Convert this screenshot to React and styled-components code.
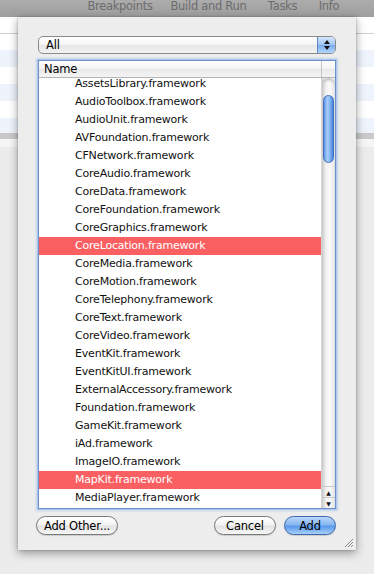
import React from 'react';
import styled, { createGlobalStyle } from 'styled-components';

const GlobalStyle = createGlobalStyle`
  html, body {
    margin: 0;
    padding: 0;
    background: #ebebeb;
  }
  body {
    font-family: "DejaVu Sans", "Liberation Sans", sans-serif;
    letter-spacing: -0.2px;
  }
`;

const FRAMEWORKS = [
  'AssetsLibrary.framework',
  'AudioToolbox.framework',
  'AudioUnit.framework',
  'AVFoundation.framework',
  'CFNetwork.framework',
  'CoreAudio.framework',
  'CoreData.framework',
  'CoreFoundation.framework',
  'CoreGraphics.framework',
  'CoreLocation.framework',
  'CoreMedia.framework',
  'CoreMotion.framework',
  'CoreTelephony.framework',
  'CoreText.framework',
  'CoreVideo.framework',
  'EventKit.framework',
  'EventKitUI.framework',
  'ExternalAccessory.framework',
  'Foundation.framework',
  'GameKit.framework',
  'iAd.framework',
  'ImageIO.framework',
  'MapKit.framework',
  'MediaPlayer.framework'
];

const SELECTED = ['CoreLocation.framework', 'MapKit.framework'];

const TOOLBAR = [
  { label: 'Breakpoints', width: 80 },
  { label: 'Build and Run', width: 97 },
  { label: 'Tasks', width: 51 },
  { label: 'Info', width: 42 }
];

const Window = styled.div`
  width: 374px;
  height: 574px;
  display: flex;
  flex-direction: column;
  overflow: hidden;
`;

const Toolbar = styled.div`
  height: 17px;
  flex: none;
  display: flex;
  align-items: flex-start;
  padding-left: 80px;
  background: linear-gradient(#acacac, #9e9e9e);
  box-sizing: border-box;
`;

const ToolLabel = styled.span`
  width: ${({ $w }) => $w}px;
  text-align: center;
  font-size: 11.5px;
  line-height: 13px;
  letter-spacing: -0.3px;
  color: #6c6c6c;
  white-space: nowrap;
`;

const Backdrop = styled.div`
  flex: 1;
  display: flex;
  align-items: flex-start;
  background: linear-gradient(
    #ffffff 0px, #ffffff 16px,
    #cfcfcf 16px, #cfcfcf 17px,
    #ffffff 17px, #ffffff 33px,
    #eef3fc 33px, #eef3fc 50px,
    #ffffff 50px, #ffffff 67px,
    #eef3fc 67px, #eef3fc 84px,
    #ffffff 84px, #ffffff 101px,
    #eef3fc 101px, #eef3fc 116px,
    #c9c9c9 116px, #c9c9c9 122px,
    #f6f6f6 122px, #f6f6f6 130px,
    #ececec 130px
  );
`;

const Sheet = styled.div`
  position: relative;
  width: 338px;
  height: 533px;
  margin-left: 18px;
  box-sizing: border-box;
  padding: 19px 20px 0 20px;
  display: flex;
  flex-direction: column;
  background: #ededed;
  box-shadow: 0 3px 9px rgba(0, 0, 0, 0.38), 0 0 2px rgba(0, 0, 0, 0.25);
`;

const Popup = styled.div`
  height: 18px;
  display: flex;
  align-items: stretch;
  border: 1px solid #8b8b8b;
  border-radius: 5px;
  overflow: hidden;
  background: linear-gradient(#ffffff, #f4f4f4 50%, #e6e6e6 51%, #f2f2f2);
  box-sizing: border-box;
`;

const PopupText = styled.span`
  flex: 1;
  padding-left: 7px;
  font-size: 11.5px;
  line-height: 16px;
  color: #000;
`;

const PopupArrows = styled.span`
  width: 17px;
  display: flex;
  flex-direction: column;
  align-items: center;
  justify-content: center;
  gap: 2px;
  border-left: 1px solid #5f86c4;
  background: linear-gradient(#d5e6fb, #9fc4f3 50%, #79abee 51%, #b4d6fb);
`;

const Table = styled.div`
  margin-top: 6px;
  height: 449px;
  display: flex;
  flex-direction: column;
  border: 1px solid #6d90c9;
  box-shadow: 0 0 0 1px #a9c6ee, 0 0 2px 2px rgba(120, 160, 225, 0.35);
  background: #fff;
  box-sizing: border-box;
`;

const Header = styled.div`
  height: 17px;
  flex: none;
  display: flex;
  background: linear-gradient(#ffffff, #f3f3f3 50%, #e9e9e9 51%, #f4f4f4);
  border-bottom: 1px solid #b4b4b4;
  box-sizing: border-box;
`;

const HeaderCell = styled.div`
  flex: 1;
  padding-left: 5px;
  font-size: 11.5px;
  line-height: 16px;
  color: #000;
  border-right: 1px solid #c4c4c4;
`;

const HeaderCorner = styled.div`
  width: 13px;
`;

const ListArea = styled.div`
  flex: 1;
  display: flex;
  min-height: 0;
`;

const List = styled.div`
  flex: 1;
  overflow: hidden;
`;

const Rows = styled.div`
  margin-top: -3px;
`;

const Row = styled.div`
  height: 18px;
  padding-left: 36px;
  font-size: 11px;
  line-height: 18px;
  white-space: nowrap;
  color: ${({ $selected }) => ($selected ? '#fff' : '#111')};
  background: ${({ $selected }) => ($selected ? '#fa5f62' : 'transparent')};
`;

const Scrollbar = styled.div`
  width: 13px;
  flex: none;
  display: flex;
  flex-direction: column;
  background: linear-gradient(90deg, #c9c9c9, #f1f1f1 30%, #fbfbfb 60%, #e2e2e2);
  border-left: 1px solid #d6d6d6;
`;

const Track = styled.div`
  flex: 1;
  padding-top: 17px;
  border-radius: 7px 7px 0 0;
  box-shadow: inset 0 4px 3px -2px #bdbdbd;
`;

const Thumb = styled.div`
  width: 11px;
  height: 68px;
  margin-left: 1px;
  border-radius: 6px;
  box-sizing: border-box;
  border: 1px solid #3f6fc2;
  background: linear-gradient(90deg, #5c92e4, #a9cdf8 35%, #8cbcf4 60%, #4a83da);
`;

const ArrowButton = styled.div`
  height: 10px;
  display: flex;
  align-items: center;
  justify-content: center;
  border-top: 1px solid #c8c8c8;
  font-size: 6px;
  color: #111;
`;

const ButtonBar = styled.div`
  margin-top: 7px;
  display: flex;
  align-items: center;
  gap: 8px;
`;

const Button = styled.button`
  height: 19px;
  width: ${({ $w }) => $w}px;
  padding: 0;
  margin-left: ${({ $shift }) => $shift || 0}px;
  border-radius: 10px;
  border: 1px solid ${({ $primary }) => ($primary ? '#3d68ad' : '#7a7a7a')};
  font-family: "DejaVu Sans", "Liberation Sans", sans-serif;
  font-size: 11.5px;
  letter-spacing: -0.2px;
  line-height: 16px;
  color: #000;
  background: ${({ $primary }) =>
    $primary
      ? 'linear-gradient(#bcd8fa, #86b6f1 45%, #5a98ea 55%, #a8d0fb)'
      : 'linear-gradient(#ffffff, #f3f3f3 45%, #e3e3e3 55%, #f6f6f6)'};
  box-shadow: 0 1px 1px rgba(0, 0, 0, 0.15);
`;

const Spacer = styled.div`
  flex: 1;
`;

const Grip = styled.svg`
  position: absolute;
  right: 2px;
  bottom: 2px;
`;

const App = () => (
  <>
    <GlobalStyle />
    <Window>
      <Toolbar>
        {TOOLBAR.map((t) => (
          <ToolLabel key={t.label} $w={t.width}>{t.label}</ToolLabel>
        ))}
      </Toolbar>
      <Backdrop>
        <Sheet>
          <Popup>
            <PopupText>All</PopupText>
            <PopupArrows>
              <svg width="6" height="4" viewBox="0 0 6 4"><path d="M3 0 L6 4 L0 4 Z" fill="#111" /></svg>
              <svg width="6" height="4" viewBox="0 0 6 4"><path d="M0 0 L6 0 L3 4 Z" fill="#111" /></svg>
            </PopupArrows>
          </Popup>
          <Table>
            <Header>
              <HeaderCell>Name</HeaderCell>
              <HeaderCorner />
            </Header>
            <ListArea>
              <List>
                <Rows>
                  {FRAMEWORKS.map((name) => (
                    <Row key={name} $selected={SELECTED.includes(name)}>{name}</Row>
                  ))}
                </Rows>
              </List>
              <Scrollbar>
                <Track>
                  <Thumb />
                </Track>
                <ArrowButton>▲</ArrowButton>
                <ArrowButton>▼</ArrowButton>
              </Scrollbar>
            </ListArea>
          </Table>
          <ButtonBar>
            <Button $w={82} $shift={-2}>Add Other...</Button>
            <Spacer />
            <Button $w={62}>Cancel</Button>
            <Button $w={52} $primary>Add</Button>
          </ButtonBar>
          <Grip width="11" height="11" viewBox="0 0 11 11">
            <path d="M10 2 L2 10 M10 5 L5 10 M10 8 L8 10" stroke="#8a8a8a" strokeWidth="1" />
          </Grip>
        </Sheet>
      </Backdrop>
    </Window>
  </>
);

export default App;
